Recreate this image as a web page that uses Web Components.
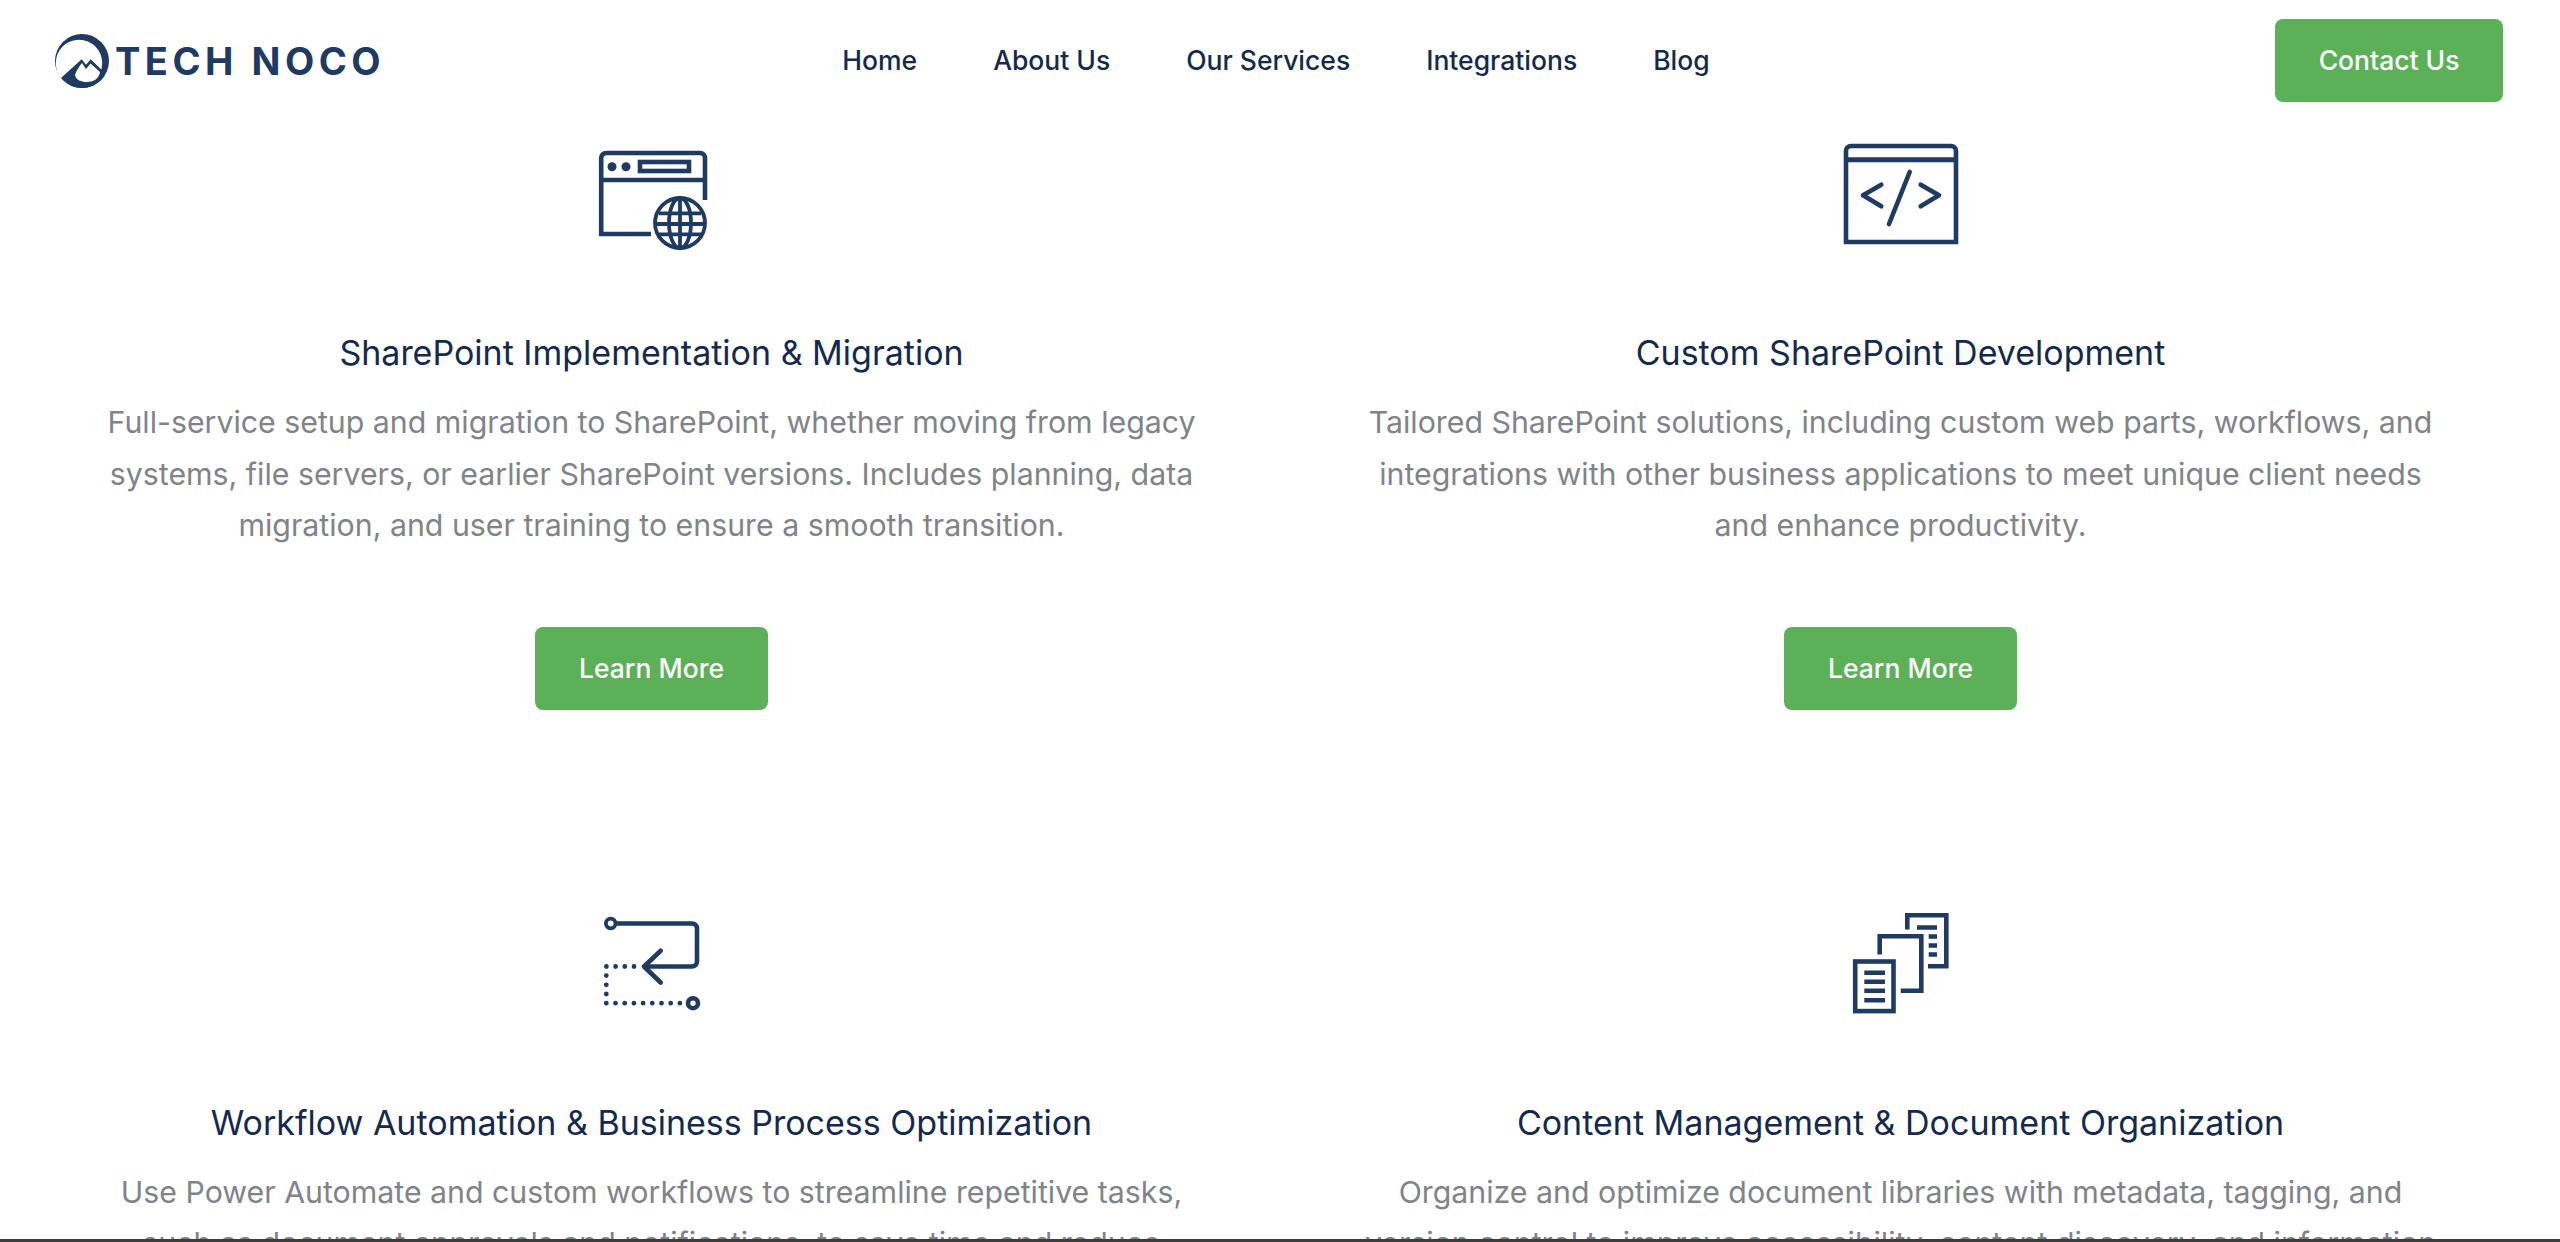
<!DOCTYPE html>
<html lang="en"><head><meta charset="utf-8"><title>Tech NoCo</title>
<style>
html,body{margin:0;padding:0;height:1242px;overflow:hidden;background:#fff;font-family:Inter,"Liberation Sans",sans-serif}
</style></head><body>
<template id="t-header">
<style>
:host{display:grid;grid-template-columns:1fr auto 1fr;align-items:center;height:121px;box-sizing:border-box;padding:0 57px 0 55px;background:#fff;position:relative;z-index:2}
.nav{display:flex;gap:76px;margin-right:6px}
.r{display:flex;justify-content:flex-end}
</style>
<div><slot name="logo"></slot></div><div class="nav"><slot name="nav"></slot></div><div class="r"><slot name="cta"></slot></div>
</template>
<template id="t-logo">
<style>
:host{display:flex;align-items:center;gap:5px;color:#1f3a63}
svg{width:55px;height:56px;display:block}
span{font:650 38px/1 Inter,"Liberation Sans",sans-serif;letter-spacing:4.5px;white-space:nowrap}
</style>
<svg viewBox="0 0 55 56"><defs><clipPath id="d"><circle cx="27" cy="28" r="27"/></clipPath></defs><g clip-path="url(#d)"><rect width="55" height="56" fill="#1f3a63"/><circle cx="24" cy="30" r="23.2" fill="#fff"/><path d="M6 45L26.7 26.3 31 31.7 35.7 26.3 47 37.3 55 56H10Z" fill="#1f3a63"/><path d="M20 42C22 36 26 31 27 30L31 36 35.5 30.5 45 39C44 46 38 49 32 49 26 49 21 47 20 42Z" fill="#fff"/><path d="M-1 35L3 36 6 45-1 52Z" fill="#fff"/></g></svg>
<span>TECH NOCO</span>
</template>
<template id="t-link">
<style>:host{display:inline-block;font:500 26.5px/1.2 Inter,"Liberation Sans",sans-serif;color:#14294e;white-space:nowrap}</style><slot></slot>
</template>
<template id="t-btn">
<style>:host{display:inline-flex;align-items:center;justify-content:center;height:83px;box-sizing:border-box;padding:0 44px;background:#5cb158;color:#fff;border-radius:8px;font:500 26.5px/1 Inter,"Liberation Sans",sans-serif;white-space:nowrap}</style><slot></slot>
</template>
<template id="t-grid">
<style>:host{display:grid;grid-template-columns:1fr 1fr;column-gap:130px;row-gap:200px;padding:19px 100px 0 92px;box-sizing:border-box;width:2560px}</style><slot></slot>
</template>
<template id="t-card">
<style>
:host{display:flex;flex-direction:column;align-items:center;text-align:center}
.i{height:118px;display:flex;justify-content:center;margin-bottom:73px}
h3{margin:0 0 22px;font:400 34px/44px Inter,"Liberation Sans",sans-serif;color:#14294e;white-space:nowrap}
p{margin:0 0 75px;font:400 30.3px/51.6px Inter,"Liberation Sans",sans-serif;color:#808488;white-space:nowrap}
</style>
<div class="i"><slot name="icon"></slot></div>
<h3><slot name="title"></slot></h3>
<p><slot name="text"></slot></p>
<slot name="cta"></slot>
</template>
<template id="t-bar"><style>:host{display:block;position:fixed;left:0;right:0;bottom:0;height:3px;background:#3c3c3c;z-index:3}</style></template>

<site-header>
 <site-logo slot="logo"></site-logo>
 <nav-link slot="nav">Home</nav-link><nav-link slot="nav">About Us</nav-link><nav-link slot="nav">Our Services</nav-link><nav-link slot="nav">Integrations</nav-link><nav-link slot="nav">Blog</nav-link>
 <green-btn slot="cta" style="padding:0 43.5px">Contact Us</green-btn>
</site-header>
<service-grid>
 <service-card>
  <svg slot="icon" width="120" height="118" viewBox="0 0 120 118" fill="none" stroke="#1f3a63" stroke-width="4.6"><g transform="translate(7 11)"><path d="M52 83H2.2V7a5 5 0 0 1 5-5H101a5 5 0 0 1 5 5V49M2.2 29H106"/><rect x="41" y="11" width="49" height="9"/><circle cx="13" cy="15.7" r="4.5" fill="#1f3a63" stroke="none"/><circle cx="27" cy="15.7" r="4.5" fill="#1f3a63" stroke="none"/><g stroke-width="3.8"><circle cx="81" cy="72" r="25"/><ellipse cx="81" cy="72" rx="11" ry="25"/><path d="M81 47v50M60 62.3h42M56 73h50M60 83.3h42"/></g></g></svg>
  <span slot="title">SharePoint Implementation &amp; Migration</span>
  <span slot="text">Full-service setup and migration to SharePoint, whether moving from legacy<br>systems, file servers, or earlier SharePoint versions. Includes planning, data<br>migration, and user training to ensure a smooth transition.</span>
  <green-btn slot="cta">Learn More</green-btn>
 </service-card>
 <service-card>
  <svg slot="icon" width="120" height="118" viewBox="0 0 120 118" fill="none" stroke="#1f3a63" stroke-width="4.6"><g transform="translate(3 4)"><path d="M2 98V7a5 5 0 0 1 5-5H107a5 5 0 0 1 5 5V98Z"/><path d="M2 15.7H112" stroke-width="5"/><path stroke-linecap="round" stroke-linejoin="round" d="M37.3 40.7L19 51.3l18.3 11M76.7 40.7L95 51.3l-18.3 11M65.7 28L45 80"/></g></svg>
  <span slot="title">Custom SharePoint Development</span>
  <span slot="text">Tailored SharePoint solutions, including custom web parts, workflows, and<br>integrations with other business applications to meet unique client needs<br>and enhance productivity.</span>
  <green-btn slot="cta">Learn More</green-btn>
 </service-card>
 <service-card>
  <svg slot="icon" width="120" height="118" viewBox="0 0 120 118" fill="none" stroke="#1f3a63" stroke-width="4.6"><g transform="translate(12 6.5)"><circle cx="6.7" cy="7" r="4.8" stroke-width="3.8"/><path d="M11.5 7H88a5 5 0 0 1 5 5V45a5 5 0 0 1-5 5H41"/><path stroke-linecap="round" stroke-linejoin="round" d="M56.7 34.3L40 50l16.7 16"/><path stroke-width="4.8" stroke-dasharray="0 9.2" stroke-linecap="round" d="M30 50H2.3V86.7H76"/><circle cx="89" cy="86.7" r="5"/></g></svg>
  <span slot="title">Workflow Automation &amp; Business Process Optimization</span>
  <span slot="text">Use Power Automate and custom workflows to streamline repetitive tasks,<br>such as document approvals and notifications, to save time and reduce</span>
 </service-card>
 <service-card>
  <svg slot="icon" width="120" height="118" viewBox="0 0 120 118" fill="none" stroke="#1f3a63" stroke-width="4.6"><g transform="translate(12 3.5)"><path d="M54.3 16V1.7H93.3V52.7H75"/><path d="M26.7 41V22.7H68.3V77.3H47.7"/><rect x="2.2" y="48" width="38.3" height="49.6"/><path d="M64 14H84M75.7 23H84M75.7 32H84M75.7 41H84M11.3 59.3H32M11.3 68.3H32M11.3 77.3H32M11.3 86.7H32"/></g></svg>
  <span slot="title">Content Management &amp; Document Organization</span>
  <span slot="text">Organize and optimize document libraries with metadata, tagging, and<br>version control to improve accessibility, content discovery, and information</span>
 </service-card>
</service-grid>
<bottom-bar></bottom-bar>
<script>
const reg=(n,t)=>customElements.define(n,class extends HTMLElement{constructor(){super();this.attachShadow({mode:'open'}).appendChild(document.getElementById(t).content.cloneNode(true))}});
reg('site-header','t-header');reg('site-logo','t-logo');reg('nav-link','t-link');reg('green-btn','t-btn');reg('service-grid','t-grid');reg('service-card','t-card');reg('bottom-bar','t-bar');
</script>
</body></html>
